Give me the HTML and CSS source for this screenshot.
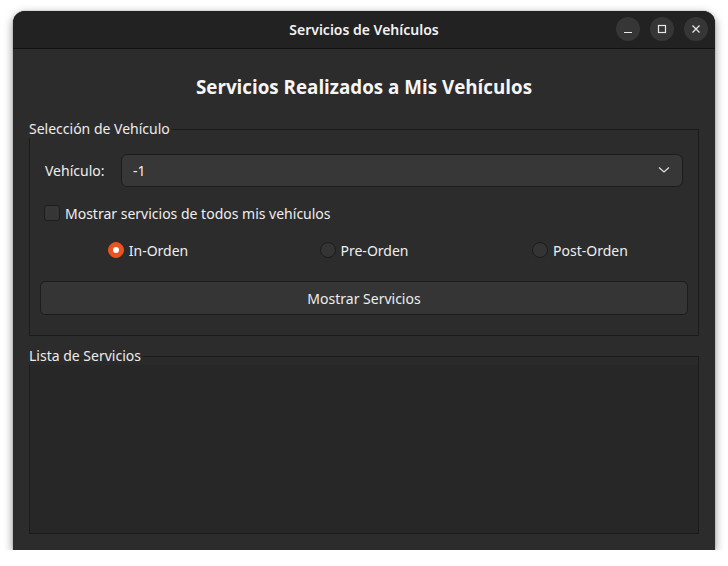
FILE: index.html
```html
<!DOCTYPE html>
<html lang="es">
<head>
<meta charset="utf-8">
<title>Servicios de Vehículos</title>
<link rel="stylesheet" href="styles.css">
</head>
<body>
<div class="window">
  <header class="titlebar">
    <span class="title">Servicios de Vehículos</span>
    <div class="controls">
      <span class="ctl"><svg width="10" height="10" viewBox="0 0 10 10"><path d="M1 8.5h8" stroke="#e8e8e8" stroke-width="1.2"/></svg></span>
      <span class="ctl"><svg width="10" height="10" viewBox="0 0 10 10"><rect x="1.5" y="1.5" width="7" height="7" fill="none" stroke="#e8e8e8" stroke-width="1.2"/></svg></span>
      <span class="ctl"><svg width="10" height="10" viewBox="0 0 10 10"><path d="M1.5 1.5l7 7M8.5 1.5l-7 7" stroke="#e8e8e8" stroke-width="1.2"/></svg></span>
    </div>
  </header>
  <main class="content">
    <h1 class="heading">Servicios Realizados a Mis Vehículos</h1>
    <fieldset class="group">
      <legend class="group-label">Selección de Vehículo</legend>
      <div class="group-body">
        <div class="combo-row">
          <span class="combo-label">Vehículo:</span>
          <div class="combo">
            <span>-1</span>
            <svg width="12" height="8" viewBox="0 0 12 8"><path d="M1 1.5l5 4.5 5-4.5" fill="none" stroke="#dcdcdc" stroke-width="1.3"/></svg>
          </div>
        </div>
        <label class="check-row"><span class="checkbox"></span><span>Mostrar servicios de todos mis vehículos</span></label>
        <div class="radios">
          <label class="radio-item"><span class="radio checked"></span><span>In-Orden</span></label>
          <label class="radio-item"><span class="radio"></span><span>Pre-Orden</span></label>
          <label class="radio-item"><span class="radio"></span><span>Post-Orden</span></label>
        </div>
        <button class="btn">Mostrar Servicios</button>
      </div>
    </fieldset>
    <fieldset class="group list-group">
      <legend class="group-label">Lista de Servicios</legend>
      <div class="list"></div>
    </fieldset>
  </main>
</div>
</body>
</html>
```
FILE: styles.css
```css
* { box-sizing: border-box; }
html, body { margin: 0; padding: 0; background: #ffffff; }
body {
  font-family: "Noto Sans", "Open Sans", sans-serif;
  color: #efefef;
  font-size: 14px;
}
.window {
  margin: 11px 0 0 13px;
  width: 702px;
  height: 539px;
  background: #2c2c2c;
  border-radius: 12px 12px 0 0;
  box-shadow: 0 3px 10px rgba(0,0,0,0.45), 0 0 1px rgba(0,0,0,0.6);
  display: flex;
  flex-direction: column;
  overflow: hidden;
}
.titlebar {
  height: 38px;
  flex: none;
  background: #222222;
  border-bottom: 1px solid #121212;
  display: flex;
  align-items: center;
  justify-content: center;
  position: relative;
}
.title {
  font-size: 14px;
  font-weight: 600;
  color: #f2f2f2;
}
.controls {
  position: absolute;
  right: 7px;
  top: 6px;
  display: flex;
  gap: 10px;
}
.ctl {
  width: 24px;
  height: 24px;
  border-radius: 50%;
  background: #363636;
  display: flex;
  align-items: center;
  justify-content: center;
}
.content {
  flex: 1;
  padding: 0 16px 16px;
  display: flex;
  flex-direction: column;
}
.heading {
  margin: 26px 0 0;
  height: 25px;
  text-align: center;
  font-size: 18.8px;
  font-weight: 700;
  line-height: 25px;
  color: #f6f6f6;
  font-family: "Open Sans", "Noto Sans", sans-serif;
}
.group {
  margin: 0;
  padding: 0;
  border: 1px solid #1b1b1b;
  min-width: 0;
}
.group:first-of-type { margin-top: 20px; }
.group-label {
  padding: 0 2px 0 0;
  margin-left: -1px;
  font-size: 14px;
  line-height: 18px;
  color: #ececec;
}
.group-body {
  padding: 15px 10px 20px;
  display: flex;
  flex-direction: column;
}
.combo-row {
  display: flex;
  align-items: center;
  padding: 0 5px;
  height: 34px;
}
.combo-label {
  width: 76px;
  flex: none;
}
.combo {
  flex: 1;
  height: 33px;
  background: #373737;
  border: 1px solid #1c1c1c;
  border-radius: 6px;
  display: flex;
  align-items: center;
  justify-content: space-between;
  padding: 0 12px 0 11px;
}
.check-row {
  display: flex;
  align-items: center;
  gap: 5px;
  margin-top: 16px;
  padding-left: 4px;
  height: 20px;
}
.checkbox {
  width: 16px;
  height: 16px;
  border: 1px solid #1c1c1c;
  border-radius: 3px;
  background: #363636;
  flex: none;
}
.radios {
  display: grid;
  grid-template-columns: 1fr 1fr 1fr;
  margin-top: 17px;
  height: 20px;
}
.radio-item {
  display: flex;
  align-items: center;
  justify-content: center;
  gap: 5px;
}
.radio {
  width: 16px;
  height: 16px;
  border-radius: 50%;
  background: #343434;
  border: 1px solid #1c1c1c;
  flex: none;
  display: flex;
  align-items: center;
  justify-content: center;
}
.radio.checked {
  background: #e95420;
  border-color: #e95420;
}
.radio.checked::after {
  content: "";
  width: 6px;
  height: 6px;
  border-radius: 50%;
  background: #ffffff;
}
.btn {
  margin-top: 21px;
  height: 34px;
  background: #353535;
  border: 1px solid #1c1c1c;
  border-radius: 5px;
  color: #eeeeee;
  font-family: inherit;
  font-size: 14px;
}
.list-group {
  margin-top: 11px;
  flex: 1;
  display: flex;
  flex-direction: column;
  background: #2a2a2a;
}
.list {
  flex: 1;
  background: #272727;
}
```
